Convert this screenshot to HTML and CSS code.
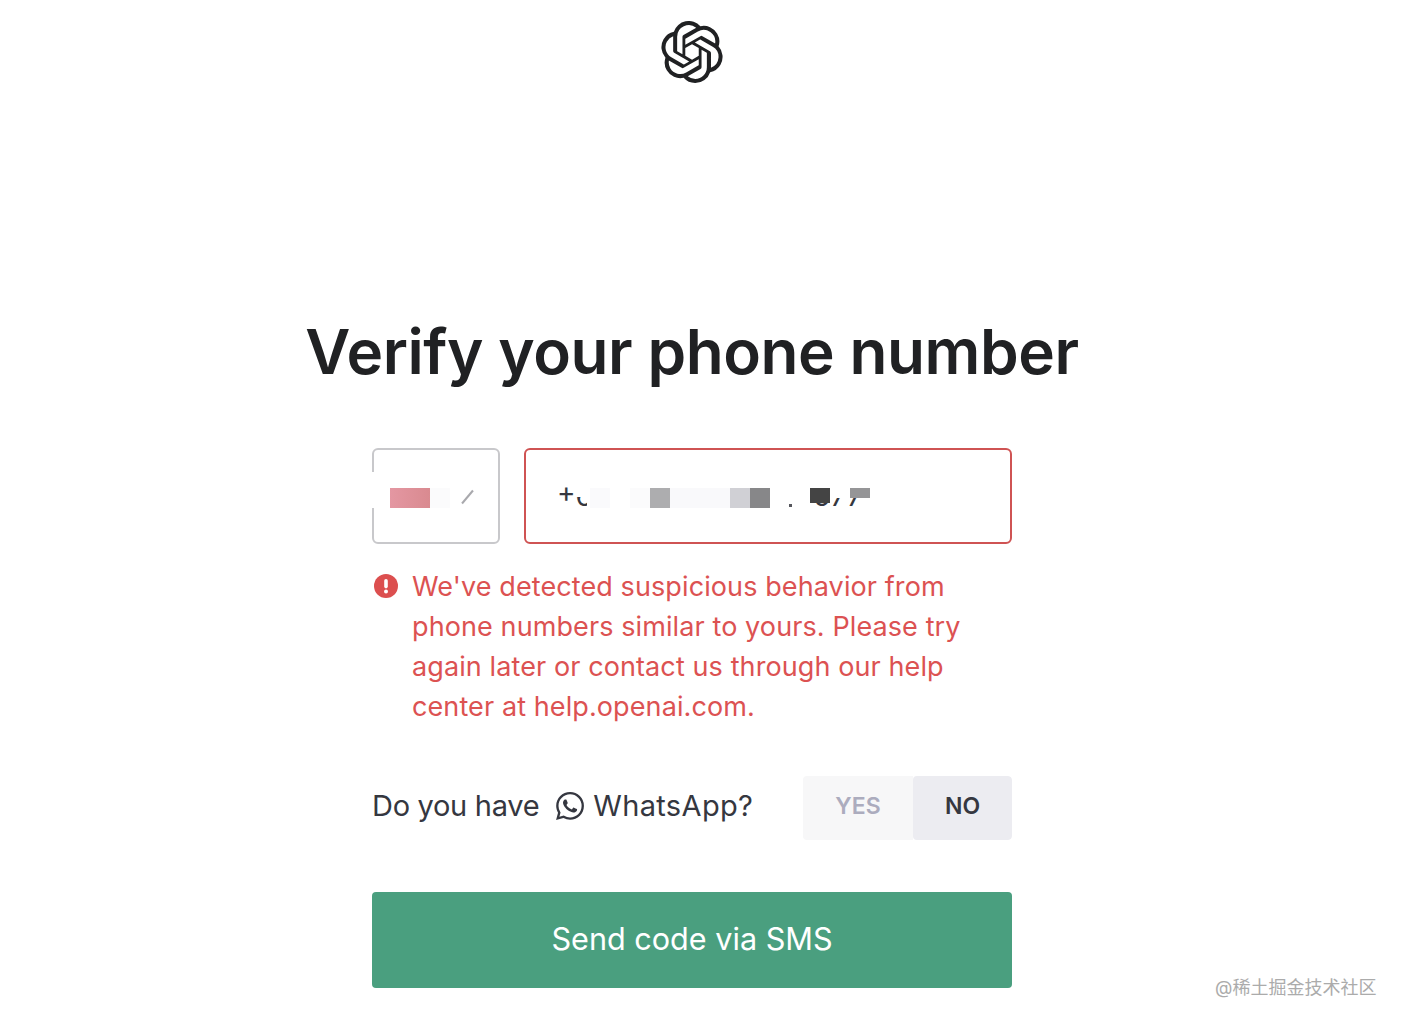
FILE: index.html
```html
<!DOCTYPE html>
<html lang="en">
<head>
    <meta charset="UTF-8">
    <meta name="viewport" content="width=device-width, initial-scale=1.0">
    <title>Verify your phone number</title>
    <link rel="stylesheet" href="styles.css">
</head>
<body>

    <div class="page">
        <svg class="logo" viewBox="0 0 24 24" aria-label="OpenAI">
            <path d="M22.2819 9.8211a5.9847 5.9847 0 0 0-.5157-4.9108 6.0462 6.0462 0 0 0-6.5098-2.9A6.0651 6.0651 0 0 0 4.9807 4.1818a5.9847 5.9847 0 0 0-3.9977 2.9 6.0462 6.0462 0 0 0 .7427 7.0966 5.98 5.98 0 0 0 .511 4.9107 6.051 6.051 0 0 0 6.5146 2.9001A5.9847 5.9847 0 0 0 13.2599 24a6.0557 6.0557 0 0 0 5.7718-4.2058 5.9894 5.9894 0 0 0 3.9977-2.9001 6.0557 6.0557 0 0 0-.7475-7.0729zm-9.022 12.6081a4.4755 4.4755 0 0 1-2.8764-1.0408l.1419-.0804 4.7783-2.7582a.7948.7948 0 0 0 .3927-.6813v-6.7369l2.02 1.1686a.071.071 0 0 1 .038.052v5.5826a4.504 4.504 0 0 1-4.4945 4.4944zm-9.6607-4.1254a4.4708 4.4708 0 0 1-.5346-3.0137l.142.0852 4.783 2.7582a.7712.7712 0 0 0 .7806 0l5.8428-3.3685v2.3324a.0804.0804 0 0 1-.0332.0615L9.74 19.9502a4.4992 4.4992 0 0 1-6.1408-1.6464zM2.3408 7.8956a4.485 4.485 0 0 1 2.3655-1.9728V11.6a.7664.7664 0 0 0 .3879.6765l5.8144 3.3543-2.0201 1.1685a.0757.0757 0 0 1-.071 0l-4.8303-2.7865A4.504 4.504 0 0 1 2.3408 7.872zm16.5963 3.8558L13.1038 8.364 15.1192 7.2a.0757.0757 0 0 1 .071 0l4.8303 2.7913a4.4944 4.4944 0 0 1-.6765 8.1042v-5.6772a.79.79 0 0 0-.407-.667zm2.0107-3.0231l-.142-.0852-4.7735-2.7818a.7759.7759 0 0 0-.7854 0L9.409 9.2297V6.8974a.0662.0662 0 0 1 .0284-.0615l4.8303-2.7866a4.4992 4.4992 0 0 1 6.6802 4.66zM8.3065 12.863l-2.02-1.1638a.0804.0804 0 0 1-.038-.0567V6.0742a4.4992 4.4992 0 0 1 7.3757-3.4537l-.142.0805L8.704 5.459a.7948.7948 0 0 0-.3927.6813zm1.0976-2.3654l2.602-1.4998 2.6069 1.4998v2.9994l-2.5974 1.4997-2.6067-1.4997Z"/>
        </svg>

        <h1>Verify your phone number</h1>

        <div class="form">
            <div class="phone-row">
                <div class="country">
                    <span class="border-gap"></span>
                    <span class="flag"></span>
                    <span class="flag-fade"></span>
                    <span class="slash"></span>
                </div>
                <div class="phone">
                    <span class="phone-text"><span class="plus">+</span>6</span>
                    <span class="phone-end">677</span>
                    <!-- Blurred out digits -->
                    <span class="cell c1"></span>
                    <span class="cell c2"></span>
                    <span class="cell c3"></span>
                    <span class="cell c4"></span>
                    <span class="cell c5"></span>
                    <span class="cell c6"></span>
                    <span class="cell c7"></span>
                    <span class="cell c8"></span>
                    <span class="cell c9"></span>
                    <span class="cell c10"></span>
                    <span class="cell c11"></span>
                    <span class="cell c12"></span>
                    <span class="cell c13"></span>
                </div>
            </div>

            <div class="error">
                <svg class="error-icon" viewBox="0 0 24 24">
                    <circle cx="12" cy="12" r="12"/>
                    <rect x="10.2" y="5" width="3.6" height="9.4" rx="1.8" fill="#fff"/>
                    <circle cx="12" cy="17.4" r="2" fill="#fff"/>
                </svg>
                <p>We've detected suspicious behavior from phone numbers similar to yours. Please try again later or contact us through our help center at help.openai.com.</p>
            </div>

            <div class="whatsapp-row">
                <div class="whatsapp-label">
                    <span class="have">Do you have</span>
                    <svg class="whatsapp-icon" viewBox="0 0 24 24">
                        <path d="M17.472 14.382c-.297-.149-1.758-.867-2.03-.967-.273-.099-.471-.148-.67.15-.197.297-.767.966-.94 1.164-.173.199-.347.223-.644.075-.297-.15-1.255-.463-2.39-1.475-.883-.788-1.48-1.761-1.653-2.059-.173-.297-.018-.458.13-.606.134-.133.298-.347.446-.52.149-.174.198-.298.298-.497.099-.198.05-.371-.025-.52-.075-.149-.669-1.612-.916-2.207-.242-.579-.487-.5-.669-.51-.173-.008-.371-.01-.57-.01-.198 0-.52.074-.792.372-.272.297-1.04 1.016-1.04 2.479 0 1.462 1.065 2.875 1.213 3.074.149.198 2.096 3.2 5.077 4.487.709.306 1.262.489 1.694.625.712.227 1.36.195 1.871.118.571-.085 1.758-.719 2.006-1.413.248-.694.248-1.289.173-1.413-.074-.124-.272-.198-.57-.347m-5.421 7.403h-.004a9.87 9.87 0 01-5.031-1.378l-.361-.214-3.741.982.998-3.648-.235-.374a9.86 9.86 0 01-1.51-5.26c.001-5.45 4.436-9.884 9.888-9.884 2.64 0 5.122 1.03 6.988 2.898a9.825 9.825 0 012.893 6.994c-.003 5.45-4.437 9.884-9.885 9.884m8.413-18.297A11.815 11.815 0 0012.05 0C5.495 0 .16 5.335.157 11.892c0 2.096.547 4.142 1.588 5.945L.057 24l6.305-1.654a11.882 11.882 0 005.683 1.448h.005c6.554 0 11.89-5.335 11.893-11.893a11.821 11.821 0 00-3.48-8.413Z"/>
                    </svg>
                    <span class="app">WhatsApp?</span>
                </div>
                <div class="toggle">
                    <div class="toggle-yes">YES</div>
                    <div class="toggle-no">NO</div>
                </div>
            </div>

            <button class="send">Send code via SMS</button>
        </div>
    </div>

    <div class="watermark">@稀土掘金技术社区</div>

</body>
</html>
```

FILE: styles.css
```css
body {
    font-family: 'Inter', 'Noto Sans CJK SC', sans-serif;
    background-color: white;
    margin: 0;
    padding: 0;
}

.page {
    width: 640px;
    height: 1024px;
    margin-left: 372px;
    display: flex;
    flex-direction: column;
    align-items: center;
    padding-top: 21px;
    box-sizing: border-box;
}

.logo {
    width: 62px;
    height: 62px;
    fill: #202123;
    flex: none;
}

h1 {
    margin: 231px -100px 0;
    font-size: 62px;
    line-height: 76px;
    font-weight: 600;
    letter-spacing: -0.42px;
    color: #202123;
    white-space: nowrap;
}

.form {
    width: 640px;
    margin-top: 58px;
}

.phone-row {
    display: flex;
    gap: 24px;
}

.country, .phone {
    position: relative;
    height: 96px;
    box-sizing: border-box;
    border-radius: 6px;
    background-color: white;
}

.country {
    width: 128px;
    border: 2px solid #c8c8cb;
}

.phone {
    flex: 1;
    border: 2px solid #cf5353;
    font-size: 28px;
    color: #353740;
}

.border-gap {
    position: absolute;
    left: -2px;
    top: 22px;
    width: 2px;
    height: 36px;
    background-color: white;
}

.flag {
    position: absolute;
    left: 16px;
    top: 38px;
    width: 40px;
    height: 20px;
    background: linear-gradient(90deg, #e497a2, #d98a90);
}

.flag-fade {
    position: absolute;
    left: 56px;
    top: 38px;
    width: 20px;
    height: 20px;
    background-color: #fbfbfc;
}

.slash {
    position: absolute;
    left: 85px;
    top: 46px;
    width: 17px;
    height: 2px;
    background-color: #a9a9ad;
    transform: rotate(-50deg);
}

.phone-text, .phone-end {
    position: absolute;
    top: 26px;
    line-height: 40px;
}

.phone-text {
    left: 31px;
}

.plus {
    display: inline-block;
    transform: translateY(-4px);
}

.phone-end {
    left: 287px;
}

.cell {
    position: absolute;
    top: 38px;
    width: 20px;
    height: 20px;
}

/* Offsets inside the field, borders excluded */
.c1 { left: 50px; top: 20px; width: 14px; height: 27px; background-color: white; }
.c2 { left: 61px; top: 20px; width: 222px; height: 60px; background-color: white; }
.c3 { left: 64px; width: 20px; background-color: #fafafc; }
.c4 { left: 104px; width: 20px; background-color: #fbfbfc; }
.c5 { left: 124px; width: 20px; background-color: #adadaf; }
.c6 { left: 144px; width: 60px; background-color: #f9f9fb; }
.c7 { left: 204px; width: 20px; background-color: #d0d0d5; }
.c8 { left: 224px; width: 20px; background-color: #878789; }
.c9 { left: 304px; top: 34px; width: 20px; height: 14px; background-color: white; }
.c10 { left: 263px; top: 54px; width: 3px; height: 3px; background-color: #55565c; }
.c11 { left: 283px; top: 26px; width: 62px; height: 12px; background-color: white; }
.c12 { left: 284px; top: 38px; width: 20px; height: 15px; background-color: #444; }
.c13 { left: 324px; top: 38px; width: 20px; height: 10px; background-color: #959597; }

.error {
    display: flex;
    gap: 14px;
    margin-top: 23px;
    padding-left: 2px;
    color: #dc5252;
}

.error-icon {
    width: 24px;
    height: 24px;
    margin-top: 7px;
    fill: #dc4f4f;
    flex: none;
}

.error p {
    margin: 0;
    font-size: 27px;
    line-height: 40px;
    letter-spacing: 0.1px;
}

.whatsapp-row {
    display: flex;
    justify-content: space-between;
    align-items: center;
    margin-top: 49px;
}

.whatsapp-label {
    display: flex;
    align-items: center;
    font-size: 29px;
    color: #353740;
    padding-bottom: 6px;
}

.have {
    letter-spacing: -0.3px;
}

.app {
    letter-spacing: 0.35px;
}

.whatsapp-icon {
    width: 28px;
    height: 28px;
    margin: 2px 9px 0 17px;
    fill: #353740;
}

.toggle {
    display: flex;
    width: 209px;
    height: 64px;
    font-size: 23px;
    font-weight: 600;
    border-radius: 4px;
    overflow: hidden;
}

.toggle-yes, .toggle-no {
    display: flex;
    align-items: center;
    justify-content: center;
    padding-bottom: 4px;
    box-sizing: border-box;
}

.toggle-yes {
    width: 110px;
    background-color: #f7f7f8;
    color: #acacbe;
}

.toggle-no {
    flex: 1;
    background-color: #ececf1;
    color: #353740;
    border-radius: 4px;
}

.send {
    display: block;
    width: 100%;
    height: 96px;
    margin-top: 52px;
    padding-bottom: 4px;
    border: none;
    border-radius: 4px;
    background-color: #4a9f7f;
    color: white;
    font-family: inherit;
    font-size: 30.6px;
    cursor: pointer;
}

.watermark {
    position: absolute;
    left: 1215px;
    top: 973px;
    font-size: 18px;
    color: #ababab;
}
```
